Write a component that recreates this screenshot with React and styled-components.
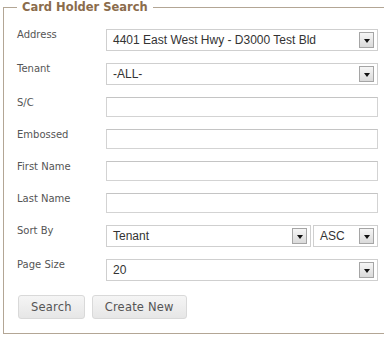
import styled, { createGlobalStyle } from "styled-components";

const Global = createGlobalStyle`
  html, body {
    margin: 0;
    padding: 0;
    background: #fff;
    overflow: hidden;
  }
`;

const Fieldset = styled.fieldset`
  margin: 0 0 0 3px;
  padding: 15px 0 14px 13px;
  width: 367px;
  border: 1px solid #b3a695;
  border-right: none;
  font-family: "DejaVu Sans", Verdana, sans-serif;
`;

const Legend = styled.legend`
  padding: 0 5px;
  line-height: 14px;
  font-family: "DejaVu Sans", Verdana, sans-serif;
  font-size: 11.5px;
  font-weight: bold;
  color: #8b6c4c;
`;

const Form = styled.div`
  display: grid;
  grid-template-columns: 89px 272px;
  row-gap: 12px;
  align-items: start;
`;

const Label = styled.label`
  font-size: 10px;
  color: #555;
  padding-top: ${(p) => (p.$select ? 0 : 0)}px;
  line-height: 12px;
`;

const Inline = styled.div`
  display: flex;
  gap: 2px;
`;

const SelectBox = styled.div`
  position: relative;
  box-sizing: border-box;
  width: ${(p) => p.$w}px;
  height: 22px;
  border: 1px solid #cfcfcf;
  background: #fff;
  padding: 0 0 0 6px;
  font-family: "Liberation Sans", Arial, sans-serif;
  font-size: 12px;
  line-height: 20px;
  color: #333;
  white-space: nowrap;
  overflow: hidden;
`;

const Arrow = styled.span`
  position: absolute;
  right: 3px;
  top: 2px;
  box-sizing: border-box;
  width: 15px;
  height: 16px;
  border: 1px solid #a5a5a5;
  background: linear-gradient(#f6f6f6, #dadada);
  display: flex;
  align-items: center;
  justify-content: center;
  &::after {
    content: "";
    border-left: 3px solid transparent;
    border-right: 3px solid transparent;
    border-top: 4px solid #111;
    margin-top: 1px;
  }
`;

const TextInput = styled.input`
  box-sizing: border-box;
  width: 272px;
  height: 20px;
  border: 1px solid #d3d3d3;
  border-top-color: #c4c4c4;
  padding: 0 4px;
  margin: 0;
  font-family: "Liberation Sans", Arial, sans-serif;
  font-size: 12px;
  outline: none;
`;

const Buttons = styled.div`
  display: flex;
  gap: 7px;
  margin-top: 14px;
  margin-left: 1px;
`;

const Button = styled.button`
  box-sizing: border-box;
  height: 24px;
  padding: 0 12px;
  border: 1px solid #d9d9d9;
  border-radius: 3px;
  background: linear-gradient(#f5f5f5, #e6e6e6);
  font-family: "DejaVu Sans", Verdana, sans-serif;
  font-size: 11.5px;
  color: #555;
  letter-spacing: 0.2px;
`;

const Select = ({ value, width = 272 }) => (
  <SelectBox $w={width}>
    {value}
    <Arrow />
  </SelectBox>
);

export default function App() {
  return (
    <>
      <Global />
      <Fieldset>
        <Legend>Card Holder Search</Legend>
        <Form>
          <Label $select>Address</Label>
          <Select value="4401 East West Hwy - D3000 Test Bld" />
          <Label $select>Tenant</Label>
          <Select value="-ALL-" />
          <Label>S/C</Label>
          <TextInput />
          <Label>Embossed</Label>
          <TextInput />
          <Label>First Name</Label>
          <TextInput />
          <Label>Last Name</Label>
          <TextInput />
          <Label $select>Sort By</Label>
          <Inline>
            <Select value="Tenant" width={205} />
            <Select value="ASC" width={65} />
          </Inline>
          <Label $select>Page Size</Label>
          <Select value="20" />
        </Form>
        <Buttons>
          <Button>Search</Button>
          <Button>Create New</Button>
        </Buttons>
      </Fieldset>
    </>
  );
}
